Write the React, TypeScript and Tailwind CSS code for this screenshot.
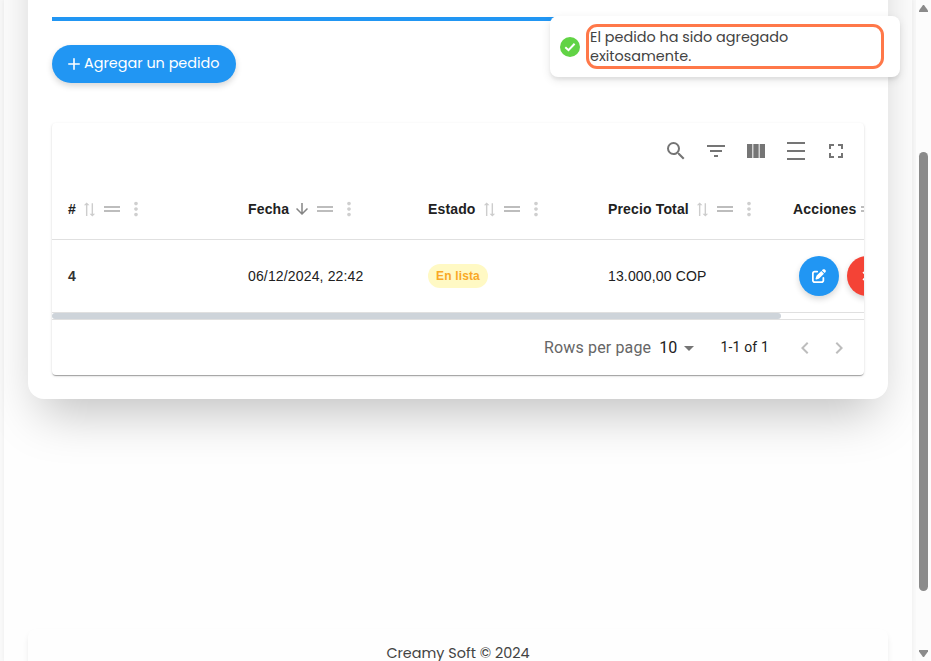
import type { ReactNode } from 'react';
import {
  MdSearch,
  MdFilterList,
  MdFullscreen,
  MdSyncAlt,
  MdDragHandle,
  MdMoreVert,
  MdArrowDownward,
  MdArrowDropDown,
  MdChevronLeft,
  MdChevronRight,
} from 'react-icons/md';
import { FaPenToSquare, FaXmark } from 'react-icons/fa6';

const POPPINS = "font-[Poppins,Inter,sans-serif]";

function ViewColumnIcon() {
  return (
    <svg viewBox="0 0 24 24" className="size-6" fill="currentColor">
      <path d="M14.67 5v14H9.33V5h5.34zm1 14H21V5h-5.33v14zm-7.34 0V5H3v14h5.33z" />
    </svg>
  );
}

function DensityIcon() {
  return (
    <svg viewBox="0 0 24 24" className="size-6" fill="currentColor">
      <path d="M3 3h18v2H3zM3 11h18v2H3zM3 19h18v2H3z" />
    </svg>
  );
}

function HeaderCell({ label, width, sorted = false }: { label: string; width: string; sorted?: boolean }) {
  return (
    <div className={`${width} flex shrink-0 items-center`}>
      <span className="whitespace-nowrap">{label}</span>
      {sorted ? (
        <MdArrowDownward className="ml-1 size-[18px] text-[#858585]" />
      ) : (
        <span className="ml-[5px] flex w-[17px] justify-center text-[#cdcdcd]">
          <MdSyncAlt className="size-[17px] shrink-0 -rotate-90" />
        </span>
      )}
      <MdDragHandle className="ml-0.5 size-6 shrink-0 text-[#bdbdbd]" />
      <MdMoreVert className="ml-px size-[22px] shrink-0 text-[#cfcfcf]" />
    </div>
  );
}

function Tool({ children }: { children: ReactNode }) {
  return <button className="flex size-10 items-center justify-center">{children}</button>;
}

function OrdersTable() {
  return (
    <div className="mt-10 h-[252px] overflow-hidden rounded-[4px] bg-white font-['Liberation_Sans',sans-serif] text-sm text-[#212121] shadow-[0_2px_1px_-1px_rgba(0,0,0,0.2),0_1px_1px_0_rgba(0,0,0,0.14),0_1px_3px_0_rgba(0,0,0,0.12)]">
      <div className="flex h-14 items-center justify-end pr-2 text-[#757575]">
        <Tool><MdSearch className="size-6" /></Tool>
        <Tool><MdFilterList className="size-6" /></Tool>
        <Tool><ViewColumnIcon /></Tool>
        <Tool><DensityIcon /></Tool>
        <Tool><MdFullscreen className="size-6" /></Tool>
      </div>
      <div className="flex h-[61px] items-center border-b border-[#e0e0e0] pl-4 font-bold tracking-[0.15px]">
        <HeaderCell label="#" width="w-[180px]" />
        <HeaderCell label="Fecha" width="w-[180px]" sorted />
        <HeaderCell label="Estado" width="w-[180px]" />
        <HeaderCell label="Precio Total" width="w-[185px]" />
        <div className="flex w-[120px] shrink-0 items-center">
          Acciones
          <MdDragHandle className="ml-px size-6 shrink-0 text-[#bdbdbd]" />
        </div>
      </div>
      <div className="flex h-[73px] items-center border-b border-[#e0e0e0] pl-4 tracking-[0.15px]">
        <div className="w-[180px] shrink-0 font-bold text-[#333]">4</div>
        <div className="w-[180px] shrink-0">06/12/2024, 22:42</div>
        <div className="w-[180px] shrink-0">
          <span className="flex h-6 w-[60px] items-center justify-center rounded-full bg-[#fff9c4] text-xs font-bold text-[#f9a825]">
            En lista
          </span>
        </div>
        <div className="w-[180px] shrink-0">13.000,00 COP</div>
        <div className="flex shrink-0 gap-2 pl-[11px] text-white">
          <button className="flex size-10 items-center justify-center rounded-full bg-[#2196f3] shadow-[0_3px_6px_rgba(0,0,0,0.16)]">
            <FaPenToSquare className="size-3.5" />
          </button>
          <button className="flex size-10 items-center justify-center rounded-full bg-[#f44336] shadow-[0_3px_6px_rgba(0,0,0,0.16)]">
            <FaXmark className="size-3.5" />
          </button>
        </div>
      </div>
      <div className="h-[7px] border-b border-[#e0e0e0]">
        <div className="h-1.5 w-[729px] rounded-full bg-[#ced4da]" />
      </div>
      <div className="flex h-[55px] items-center justify-end pr-2 font-[Roboto,sans-serif]">
        <span className="text-base tracking-[0.15px] text-[#666]">Rows per page</span>
        <span className="ml-2 text-base tracking-[0.15px]">10</span>
        <MdArrowDropDown className="-ml-px size-6 text-[#757575]" />
        <span className="ml-5 pb-0.5 tracking-[0.15px]">1-1 of 1</span>
        <span className="ml-[19px] flex h-[34px] w-[34px] items-center justify-center text-[#bdbdbd]">
          <MdChevronLeft className="size-6" />
        </span>
        <span className="flex h-[34px] w-[34px] items-center justify-center text-[#bdbdbd]">
          <MdChevronRight className="size-6" />
        </span>
      </div>
    </div>
  );
}

function Toast() {
  return (
    <div className="absolute top-4 left-[550px] flex h-[61px] w-[350px] items-center rounded-lg bg-white pl-2.5 shadow-[0_3px_10px_rgba(0,0,0,0.1),0_3px_3px_rgba(0,0,0,0.05)]">
      <svg viewBox="0 0 20 20" className="size-5 shrink-0">
        <circle cx="10" cy="10" r="10" fill="#61d345" />
        <path d="M5.3 10.3 8.5 13.2 14.6 6.7" fill="none" stroke="#fff" strokeWidth="2" />
      </svg>
      <div className={`${POPPINS} ml-1.5 h-[45px] w-[298px] rounded-[11px] border-3 border-[#ff7849] pt-px pl-px text-[14.4px] leading-[19px] text-[#434343]`}>
        <div>El pedido ha sido agregado</div>
        <div>exitosamente.</div>
      </div>
    </div>
  );
}

function Scrollbar() {
  return (
    <div className="flex w-[15px] shrink-0 flex-col items-center bg-[#fcfcfc]">
      <svg viewBox="0 0 9 7" className="mt-[5px] h-[7px] w-[9px]" fill="#8b8b8b">
        <path d="M4 0h1l4 5.5V7H0V5.5z" />
      </svg>
      <div className="mt-[140px] h-[439px] w-[9px] rounded-full bg-[#8b8b8b]" />
      <svg viewBox="0 0 9 7" className="mt-[59px] h-[7px] w-[9px]" fill="#8b8b8b">
        <path d="M0 0h9v1.5L5 7H4L0 1.5z" />
      </svg>
    </div>
  );
}

export default function App() {
  return (
    <div className="relative flex h-[661px] w-[931px] overflow-hidden bg-[#f9f9f9]">
      <div className="mr-1 ml-1 flex w-[908px] shrink-0 flex-col bg-[#fefefe] px-6 shadow-[0_0_4px_rgba(0,0,0,0.05)]">
        <main className="-mt-24 h-[495px] shrink-0 rounded-2xl bg-white px-6 pt-[113px] shadow-2xl">
          <div className="h-1 bg-[#2196f3]" />
          <button className={`${POPPINS} mt-6 flex h-[38px] w-[184px] items-center rounded-full bg-[#2196f3] pb-px pl-4 text-[14.4px] whitespace-nowrap text-white shadow-[0_3px_6px_rgba(0,0,0,0.16)]`}>
            <svg viewBox="0 0 12 12" className="mr-1 size-3" stroke="currentColor" strokeWidth="1.6" strokeLinecap="round">
              <path d="M6 .8v10.4M.8 6h10.4" />
            </svg>
            Agregar un pedido
          </button>
          <OrdersTable />
        </main>
        <footer className={`${POPPINS} mt-[230px] h-16 shrink-0 rounded-lg bg-[#fefefe] pt-[13px] text-center text-[14.4px] leading-[22px] text-[#434343] shadow-[0_4px_6px_-1px_rgba(0,0,0,0.1)]`}>
          Creamy Soft © 2024
        </footer>
      </div>
      <Scrollbar />
      <Toast />
    </div>
  );
}
